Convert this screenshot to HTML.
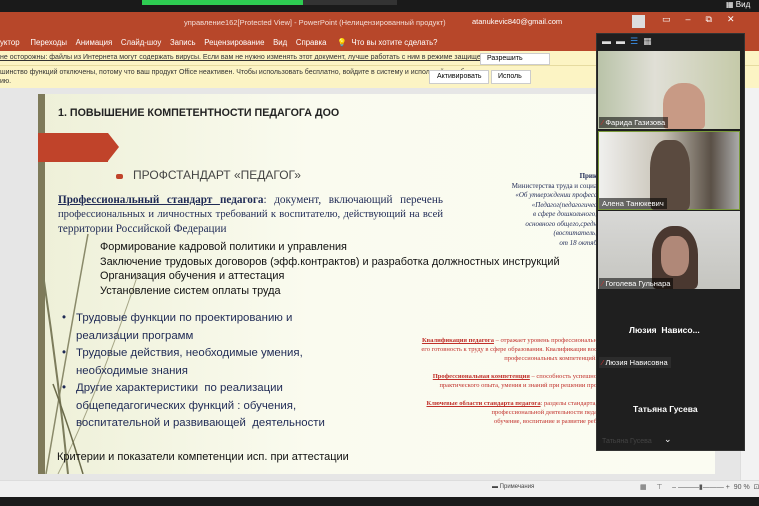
<!DOCTYPE html>
<html><head><meta charset="utf-8"><style>
*{margin:0;padding:0;box-sizing:border-box}
body{width:759px;height:506px;overflow:hidden;background:#1b1b1b;font-family:"Liberation Sans","DejaVu Sans",sans-serif;position:relative}
.a{position:absolute;white-space:nowrap}
.j{text-align:justify;text-align-last:justify;white-space:normal}
</style></head><body>
<div class="a" style="left:0;top:0;width:759px;height:12px;background:#1a1a1a"></div>
<div class="a" style="left:142px;top:0;width:161px;height:5px;background:#2ecc52"></div>
<div class="a" style="left:303px;top:0;width:94px;height:5px;background:#333"></div>
<div class="a" style="left:0;top:12px;width:759px;height:39px;background:#b7472a"></div>
<div class="a" style="left:184px;top:18px;font-size:7.5px;color:#f3ddd6">управление162[Protected View] - PowerPoint (Нелицензированный продукт)</div>
<div class="a" style="left:472px;top:17px;font-size:7.5px;color:#fff">atanukevic840@gmail.com</div>
<div class="a" style="left:632px;top:15px;width:13px;height:13px;background:#ddd"></div>
<div class="a" style="left:662px;top:14px;font-size:9px;color:#fff">▭ &nbsp;&nbsp;&nbsp;&nbsp; – &nbsp;&nbsp;&nbsp;&nbsp; ⧉ &nbsp;&nbsp;&nbsp;&nbsp; ✕</div>
<div class="a" style="left:726px;top:0;font-size:8px;color:#fff">▦ Вид</div>
<div class="a" style="left:0;top:38px;font-size:7.8px;color:#fff">уктор&nbsp;&nbsp;&nbsp;&nbsp;&nbsp;Переходы&nbsp;&nbsp;&nbsp;&nbsp;Анимация&nbsp;&nbsp;&nbsp;&nbsp;Слайд-шоу&nbsp;&nbsp;&nbsp;&nbsp;Запись&nbsp;&nbsp;&nbsp;&nbsp;Рецензирование&nbsp;&nbsp;&nbsp;&nbsp;Вид&nbsp;&nbsp;&nbsp;&nbsp;Справка&nbsp;&nbsp;&nbsp;&nbsp;&nbsp;💡&nbsp;&nbsp;Что вы хотите сделать?</div>
<div class="a" style="left:0;top:51px;width:759px;height:15px;background:#fcf4c4;border-bottom:1px solid #e6dba0"></div>
<div class="a" style="left:0;top:54px;font-size:7px;color:#333;text-decoration:underline">не осторожны: файлы из Интернета могут содержать вирусы. Если вам не нужно изменять этот документ, лучше работать с ним в режиме защищенного просмотра.</div>
<div class="a" style="left:480px;top:53px;width:70px;height:12px;background:#fff;border:1px solid #ccc;font-size:7px;padding:1px 6px">Разрешить</div>
<div class="a" style="left:0;top:66px;width:759px;height:22px;background:#fcf4c4"></div>
<div class="a" style="left:0;top:68px;font-size:7px;color:#333;line-height:9px">шинство функций отключены, потому что ваш продукт Office неактивен. Чтобы использовать бесплатно, войдите в систему и используйте веб-<br>ию.</div>
<div class="a" style="left:429px;top:70px;width:60px;height:14px;background:#fff;border:1px solid #ccc;font-size:7px;padding:2px 7px">Активировать</div>
<div class="a" style="left:491px;top:70px;width:40px;height:14px;background:#fff;border:1px solid #ccc;font-size:7px;padding:2px 6px">Исполь</div>
<div class="a" style="left:0;top:88px;width:759px;height:392px;background:#e6e6e6"></div>
<div class="a" style="left:740px;top:88px;width:19px;height:392px;background:#f2f2f2;border-left:1px solid #ddd"></div>
<div class="a" style="left:38px;top:94px;width:677px;height:380px;background:linear-gradient(90deg,#eef0d8,#fafbef 40%,#fbfcf2)"></div>
<div class="a" style="left:38px;top:94px;width:7px;height:380px;background:#7e7a5a"></div>
<svg class="a" style="left:38px;top:94px" width="120" height="380"><path d="M8 380 Q30 250 50 140" stroke="#8a8a6a" fill="none" stroke-width="1.5"/><path d="M20 380 Q60 300 100 180" stroke="#a5a585" fill="none"/><path d="M30 380 Q20 280 5 180" stroke="#7c7c5c" fill="none" stroke-width="2"/><path d="M45 380 Q30 330 15 290" stroke="#6a6a4a" fill="none" stroke-width="1.5"/></svg>
<div class="a" style="left:38px;top:133px;width:70px;height:29px;background:#c0432a"></div>
<div class="a" style="left:108px;top:133px;width:0;height:0;border-top:14.5px solid transparent;border-bottom:14.5px solid transparent;border-left:11px solid #c0432a"></div>
<div class="a" style="left:58px;top:107px;font-size:10.7px;font-weight:bold;color:#222">1. ПОВЫШЕНИЕ КОМПЕТЕНТНОСТИ ПЕДАГОГА ДОО</div>
<div class="a" style="left:116px;top:174px;width:7px;height:5px;background:#c0432a;border-radius:2px"></div>
<div class="a" style="left:133px;top:168px;font-size:12px;color:#444">ПРОФСТАНДАРТ «ПЕДАГОГ»</div>
<div class="a" style="left:58px;top:193px;width:385px;font-family:'Liberation Serif',serif;font-size:10.6px;color:#1f2a55;line-height:14.5px">
<div class="j" style="font-size:11.2px"><b><u>Профессиональный стандарт </u>педагога</b>: документ, включающий перечень</div>
<div class="j">профессиональных и личностных требований к воспитателю, действующий на всей</div>
<div style="font-size:11.2px">территории Российской Федерации</div>
</div>
<div class="a" style="left:100px;top:240px;font-size:10.9px;color:#111;line-height:14.7px">Формирование кадровой политики и управления<br>Заключение трудовых договоров (эфф.контрактов) и разработка должностных инструкций<br>Организация обучения и аттестация<br>Установление систем оплаты труда</div>
<div class="a" style="left:62px;top:310px;font-size:11.5px;color:#1f2a55;line-height:17.5px">•<br><br>•<br><br>•</div>
<div class="a" style="left:76px;top:310px;font-size:11.4px;color:#1f2a55;line-height:17.5px">Трудовые функции по проектированию и<br>реализации программ<br>Трудовые действия, необходимые умения,<br>необходимые знания<br>Другие характеристики&nbsp; по реализации<br>общепедагогических функций : обучения,<br>воспитательной и развивающей&nbsp; деятельности</div>
<div class="a" style="left:57px;top:451px;font-size:11px;color:#111">Критерии и показатели компетенции исп. при аттестации</div>
<div class="a" style="left:490px;top:172px;font-family:'Liberation Serif',serif;font-size:7px;color:#1f2a55;line-height:9.5px;text-align:right;width:107px;overflow:hidden"><b>Прик</b><br>Министерства труда и социа<br><i>«Об утверждении професс<br>«Педагог(педагогичес<br>в сфере дошкольного, <br>основного общего,средн<br>(воспитатель,<br>от 18 октяб</i></div>
<div class="a" style="left:360px;top:336px;width:237px;overflow:hidden;font-family:'Liberation Serif',serif;font-size:6.5px;color:#c0302a;line-height:9px;text-align:right"><b><u>Квалификация педагога</u></b> – отражает уровень профессиональн<br>его готовность к труду в сфере образования. Квалификация вос<br>профессиональных компетенций.<br><br><b><u>Профессиональная компетенция</u></b> – способность успешно<br>практического опыта, умения и знаний при решении про<br><br><b><u>Ключевые области стандарта педагога</u></b>: разделы стандарта,<br>профессиональной деятельности педа<br>обучение, воспитание и развитие реб</div>
<div class="a" style="left:0;top:480px;width:759px;height:17px;background:#f0f0f0;border-top:1px solid #ddd"></div>
<div class="a" style="left:492px;top:484px;font-size:6px;color:#444">▬ Примечания</div>
<div class="a" style="left:640px;top:483px;font-size:7px;color:#555">▦ &nbsp;&nbsp;&nbsp; ⊤ &nbsp;&nbsp;&nbsp; – ———▮——— + &nbsp;90 % &nbsp;⊡</div>
<div class="a" style="left:596px;top:33px;width:149px;height:418px;background:#1f1f1f;border:1px solid #333"></div>
<div class="a" style="left:602px;top:36px;font-size:9px;color:#ddd">▬ &nbsp;▬ &nbsp;<span style="color:#3a8ee6">☰</span> &nbsp;▦</div>
<div class="a" style="left:598px;top:51px;width:142px;height:78px;background:linear-gradient(90deg,#b9c3a8,#e0dfd6 40%,#c5caa9)"></div>
<div class="a" style="left:663px;top:83px;width:42px;height:46px;background:#c89a85;border-radius:45% 45% 10% 10%"></div>
<div class="a" style="left:598px;top:131px;width:142px;height:79px;background:linear-gradient(90deg,#f0f0ee,#c9c4b8 45%,#5a5046 80%,#aaa);border:1px solid #7a9a3a"></div>
<div class="a" style="left:650px;top:140px;width:40px;height:70px;background:#5a4a3f;border-radius:40% 40% 10% 10%"></div>
<div class="a" style="left:598px;top:211px;width:142px;height:78px;background:linear-gradient(180deg,#d8d8d6,#c5c5c0)"></div>
<div class="a" style="left:652px;top:226px;width:46px;height:63px;background:#4a3830;border-radius:45% 45% 10% 10%"></div>
<div class="a" style="left:661px;top:236px;width:28px;height:40px;background:#b08878;border-radius:40%"></div>
<div class="a" style="left:599px;top:117px;background:rgba(0,0,0,.55);font-size:7.5px;color:#fff;padding:1px 3px"><span style="color:#e03030">⁄</span> Фарида Газизова</div>
<div class="a" style="left:599px;top:198px;background:rgba(0,0,0,.55);font-size:7.5px;color:#fff;padding:1px 3px">Алена Танюкевич</div>
<div class="a" style="left:599px;top:278px;background:rgba(0,0,0,.55);font-size:7.5px;color:#fff;padding:1px 3px"><span style="color:#e03030">⁄</span> Гоголева Гульнара</div>
<div class="a" style="left:629px;top:325px;font-size:8.5px;font-weight:bold;color:#fff">Люзия&nbsp;&nbsp;Нависо...</div>
<div class="a" style="left:599px;top:357px;background:#2c2c2c;font-size:7.5px;color:#fff;padding:1px 3px"><span style="color:#e03030">⁄</span> Люзия Нависовна</div>
<div class="a" style="left:633px;top:404px;font-size:8.5px;font-weight:bold;color:#fff">Татьяна Гусева</div>
<div class="a" style="left:602px;top:438px;font-size:7px;color:#444">Татьяна Гусева</div>
<div class="a" style="left:664px;top:434px;font-size:9px;color:#fff">⌄</div>
</body></html>
